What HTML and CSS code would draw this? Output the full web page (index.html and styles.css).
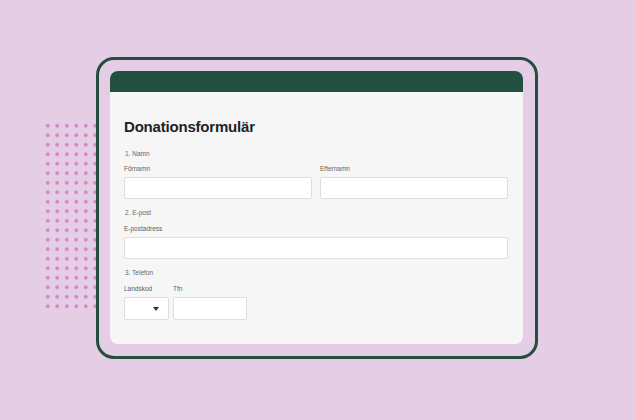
FILE: index.html
```html
<!DOCTYPE html>
<html lang="sv">
<head>
  <meta charset="UTF-8">
  <meta name="viewport" content="width=device-width, initial-scale=1.0">
  <title>Donationsformulär</title>
  <link rel="stylesheet" href="styles.css">
</head>
<body>
  <div class="dots"></div>
  <div class="frame">
    <div class="card">
      <div class="card-header"></div>
      <div class="card-body">
        <h1>Donationsformulär</h1>

        <p class="question">1. Namn</p>
        <div class="row names">
          <div class="field grow">
            <label>Förnamn</label>
            <div class="input"></div>
          </div>
          <div class="field grow">
            <label>Efternamn</label>
            <div class="input"></div>
          </div>
        </div>

        <p class="question">2. E-post</p>
        <div class="field">
          <label>E-postadress</label>
          <div class="input"></div>
        </div>

        <p class="question">3. Telefon</p>
        <div class="row phone">
          <div class="field country">
            <label>Landskod</label>
            <div class="input select"><span class="caret"></span></div>
          </div>
          <div class="field number">
            <label>Tfn</label>
            <div class="input"></div>
          </div>
        </div>
      </div>
    </div>
  </div>
</body>
</html>
```

FILE: styles.css
```css
body {
  margin: 0;
  width: 636px;
  height: 420px;
  background-color: #e5cde5;
  font-family: "Liberation Sans", Arial, sans-serif;
  padding: 57px 0 0 96px;
  box-sizing: border-box;
  position: relative;
  overflow: hidden;
}

/* decorative dot grid behind the frame */
.dots {
  position: absolute;
  left: 43px;
  top: 121px;
  width: 57px;
  height: 190px;
  background-image: radial-gradient(circle, #d587c8 1.6px, transparent 2.1px);
  background-size: 9.5px 9.5px;
}

.frame {
  position: relative;
  width: 442px;
  height: 302px;
  box-sizing: border-box;
  border: 3px solid #234e40;
  border-radius: 18px;
  background-color: #e5cde5;
  padding: 11px 12px 12px 11px;
}

.card {
  height: 100%;
  background: #f6f6f6;
  border-radius: 8px;
  overflow: hidden;
}

.card-header {
  height: 21px;
  background-color: #23503f;
}

.card-body {
  padding: 0 15px 0 14px;
}

h1 {
  margin: 26px 0 0;
  font-size: 15px;
  line-height: 18px;
  font-weight: bold;
  color: #222;
  letter-spacing: -0.2px;
}

.question {
  margin: 9px 0 0 1px;
  font-size: 6.5px;
  line-height: 10px;
  color: #666;
}

h1 + .question {
  margin-top: 13px;
}

.row {
  display: flex;
  gap: 8px;
}

.grow {
  flex: 1;
}

label {
  display: block;
  margin-top: 6px;
  font-size: 6.5px;
  line-height: 10px;
  color: #5f5f5f;
}

.names label {
  margin-top: 5px;
}

.input {
  margin-top: 3px;
  height: 22px;
  box-sizing: border-box;
  background: #ffffff;
  border: 1px solid #dedede;
  border-radius: 2px;
}

.phone {
  gap: 4px;
}

.country {
  width: 45px;
}

.number {
  width: 74px;
}

.phone .input {
  height: 23px;
}

.select {
  display: flex;
  align-items: center;
  justify-content: flex-end;
  padding-right: 9px;
}

.caret {
  width: 0;
  height: 0;
  border-left: 3px solid transparent;
  border-right: 3px solid transparent;
  border-top: 4px solid #333;
}
```
